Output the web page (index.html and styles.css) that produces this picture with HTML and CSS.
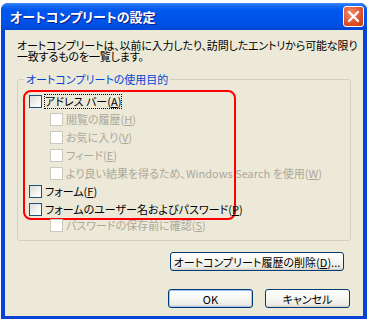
FILE: index.html
```html
<!DOCTYPE html>
<html lang="ja">
<head>
  <meta charset="UTF-8">
  <meta name="viewport" content="width=device-width, initial-scale=1.0">
  <title>オートコンプリートの設定</title>
  <link rel="stylesheet" href="styles.css">
</head>
<body>
  <div class="window">
    <!-- タイトルバー -->
    <div class="titlebar">
      <span class="title">オートコンプリートの設定</span>
      <button class="close" aria-label="閉じる">
        <svg width="13" height="13" viewBox="0 0 13 13">
          <path d="M2 2 L11 11 M11 2 L2 11" stroke="#fff" stroke-width="2.4" stroke-linecap="round"/>
        </svg>
      </button>
    </div>

    <div class="content">
      <p class="intro">オートコンプリートは、以前に入力したり、訪問したエントリから可能な限り一致するものを一覧します。</p>

      <fieldset class="group">
        <legend>オートコンプリートの使用目的</legend>

        <div class="mark">
          <div class="row">
            <span class="box"></span>
            <span class="label focus">アドレス バー(<u>A</u>)</span>
          </div>
          <div class="row sub off">
            <span class="box"></span>
            <span class="label">閲覧の履歴(<u>H</u>)</span>
          </div>
          <div class="row sub off">
            <span class="box"></span>
            <span class="label">お気に入り(<u>V</u>)</span>
          </div>
          <div class="row sub off">
            <span class="box"></span>
            <span class="label">フィード(<u>E</u>)</span>
          </div>
          <div class="row sub off">
            <span class="box"></span>
            <span class="label">より良い結果を得るため、Windows Search を使用(<u>W</u>)</span>
          </div>
          <div class="row">
            <span class="box"></span>
            <span class="label">フォーム(<u>F</u>)</span>
          </div>
          <div class="row">
            <span class="box"></span>
            <span class="label">フォームのユーザー名およびパスワード(<u>P</u>)</span>
          </div>
        </div>

        <div class="row outer off">
          <span class="box"></span>
          <span class="label">パスワードの保存前に確認(<u>S</u>)</span>
        </div>
      </fieldset>

      <div class="actions">
        <button class="btn wide">オートコンプリート履歴の削除(<u>D</u>)...</button>
      </div>

      <div class="footer">
        <button class="btn default">OK</button>
        <button class="btn">キャンセル</button>
      </div>
    </div>
  </div>
</body>
</html>
```

FILE: styles.css
```css
body {
  margin: 0;
  background-color: #fff;
  font-family: "Noto Sans CJK JP", "Liberation Sans", sans-serif;
  font-feature-settings: "palt";
  font-size: 11px;
  color: #000;
}
.window {
  margin: 3px 0 0 1px;
  width: 366px;
  height: 316px;
  display: flex;
  flex-direction: column;
  background-color: #0843d8;
  border-radius: 7px 7px 0 0;
  overflow: hidden;
}
.titlebar {
  height: 27px;
  flex-shrink: 0;
  display: flex;
  align-items: center;
  justify-content: space-between;
  padding: 0 3px 0 9px;
  background: linear-gradient(to bottom, #3d8cf6 0%, #1a6cf4 10%, #0058ee 25%, #0053ea 60%, #004fe2 85%, #0045d2 100%);
}
.title {
  color: #fff;
  font-size: 13px;
  font-weight: bold;
  text-shadow: 1px 1px 0 #0a1c8a;
}
.close {
  width: 21px;
  height: 21px;
  padding: 0;
  display: flex;
  align-items: center;
  justify-content: center;
  border: 1px solid #fff;
  border-radius: 3px;
  background: radial-gradient(circle at 35% 30%, #f08b6a 0%, #e0542c 55%, #c43a10 100%);
}
.content {
  flex: 1;
  margin: 0 4px 3px 4px;
  padding: 10px 12px 0 12px;
  background-color: #ece9d8;
  display: flex;
  flex-direction: column;
}
.intro {
  margin: 0 -12px 0 0;
  line-height: 11px;
  letter-spacing: -0.15px;
}
.group {
  margin: 11px 0 0 0;
  padding: 0 0 6px 0;
  border: 1px solid #d0d0bf;
  border-radius: 3px;
}
.group legend {
  margin-left: 6px;
  padding: 0 2px;
  color: #0046d5;
  line-height: 12px;
}
.mark {
  margin: 5px 0 -4px 5px;
  width: 209px;
  border: 2px solid #f00;
  border-radius: 8px;
}
.row {
  height: 18px;
  display: flex;
  align-items: center;
  gap: 3px;
  padding-left: 4px;
  white-space: nowrap;
}
.row.sub {
  padding-left: 25px;
}
.row.outer {
  padding-left: 32px;
}
.box {
  width: 11px;
  height: 11px;
  flex-shrink: 0;
  border: 1px solid #1c5180;
  background: linear-gradient(135deg, #dcdcd7 0%, #f4f4f0 60%, #fff 100%);
}
.off .box {
  border-color: #cac8bb;
  background: #fff;
}
.off .label {
  color: #aca899;
}
.label {
  line-height: 13px;
}
.focus {
  outline: 1px dotted #000;
  outline-offset: 0;
}
.actions {
  display: flex;
  justify-content: flex-end;
  margin-top: 11px;
  padding-right: 7px;
}
.footer {
  display: flex;
  justify-content: flex-end;
  gap: 12px;
  margin-top: 18px;
  padding-right: 1px;
}
.btn {
  height: 19px;
  width: 85px;
  padding: 0;
  font-family: inherit;
  font-feature-settings: "palt";
  font-size: 11px;
  color: #000;
  border: 1px solid #003c74;
  border-radius: 3px;
  background: linear-gradient(to bottom, #fff 0%, #f6f6f2 50%, #ecebe6 85%, #d6d0c5 100%);
}
.btn.wide {
  width: 174px;
}
.btn.default {
  box-shadow: inset 0 0 0 1px #a8c4f0;
}
```
